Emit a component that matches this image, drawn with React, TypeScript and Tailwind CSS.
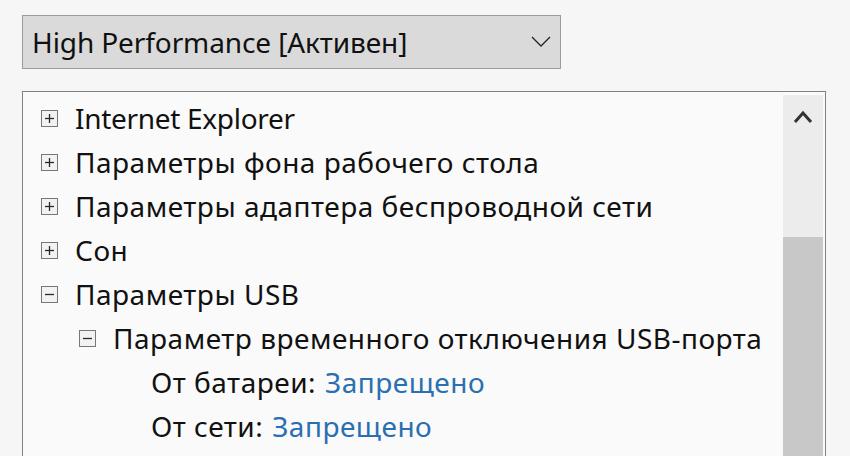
import { ReactNode } from 'react'

type Row = {
  level: number
  icon?: 'plus' | 'minus'
  label: string
  value?: string
  latin?: boolean
}

const rows: Row[] = [
  { level: 0, icon: 'plus', label: 'Internet Explorer', latin: true },
  { level: 0, icon: 'plus', label: 'Параметры фона рабочего стола' },
  { level: 0, icon: 'plus', label: 'Параметры адаптера беспроводной сети' },
  { level: 0, icon: 'plus', label: 'Сон' },
  { level: 0, icon: 'minus', label: 'Параметры USB' },
  { level: 1, icon: 'minus', label: 'Параметр временного отключения USB-порта' },
  { level: 2, label: 'От батареи:', value: 'Запрещено' },
  { level: 2, label: 'От сети:', value: 'Запрещено' },
]

function Expander({ kind }: { kind: 'plus' | 'minus' }) {
  return (
    <svg width="17" height="17" viewBox="0 0 17 17" className="shrink-0">
      <rect x="0.5" y="0.5" width="16" height="16" fill="#f2f2f2" stroke="#777" />
      <path d="M4 8.5h9" stroke="#2a2a2a" strokeWidth="1.3" />
      {kind === 'plus' && <path d="M8.5 4v9" stroke="#2a2a2a" strokeWidth="1.3" />}
    </svg>
  )
}

function Indent({ level, children }: { level: number; children: ReactNode }) {
  const pad = level === 0 ? 'pl-[18px]' : level === 1 ? 'pl-[56px]' : 'pl-[128px]'
  return <div className={`flex h-[44px] items-center gap-[17px] ${pad}`}>{children}</div>
}

export default function App() {
  return (
    <div
      className="h-[456px] w-[850px] overflow-hidden bg-[#f6f6f6] pl-[22px] pt-[15px] text-[28px] text-[#111]"
      style={{ fontFamily: '"Noto Sans", "Open Sans", sans-serif' }}
    >
      {/* Power plan dropdown */}
      <div className="flex h-[54px] w-[539px] items-center justify-between border border-[#9c9c9c] bg-[#dadada] pl-[9px] pr-[8px]">
        <span className="tracking-[-0.1px]">High Performance [Активен]</span>
        <svg width="20" height="12" viewBox="0 0 20 12" className="mr-[1px]">
          <path d="M1 1l9 9 9-9" fill="none" stroke="#222" strokeWidth="1.3" />
        </svg>
      </div>

      {/* Settings tree */}
      <div className="mt-[22px] flex h-[400px] w-[804px] border border-[#808080] bg-[#fafafa]">
        <div className="flex-1 pt-[4px]">
          {rows.map((r) => (
            <Indent key={r.label} level={r.level}>
              {r.icon && <Expander kind={r.icon} />}
              <span className={`whitespace-nowrap ${r.latin ? 'tracking-[-0.3px]' : 'tracking-[0.5px]'}`}>
                {r.label}
                {r.value && <span className="ml-[9px] text-[#2a6fb2]">{r.value}</span>}
              </span>
            </Indent>
          ))}
        </div>
        <div className="mr-[2px] mt-[3px] flex w-[40px] flex-col">
          <div className="flex h-[142px] justify-center bg-[#ececec] pt-[15px]">
            <svg width="20" height="14" viewBox="0 0 20 14">
              <path d="M2 12l8-9 8 9" fill="none" stroke="#333" strokeWidth="3" />
            </svg>
          </div>
          <div className="flex-1 bg-[#c8c8c8]" />
        </div>
      </div>
    </div>
  )
}
